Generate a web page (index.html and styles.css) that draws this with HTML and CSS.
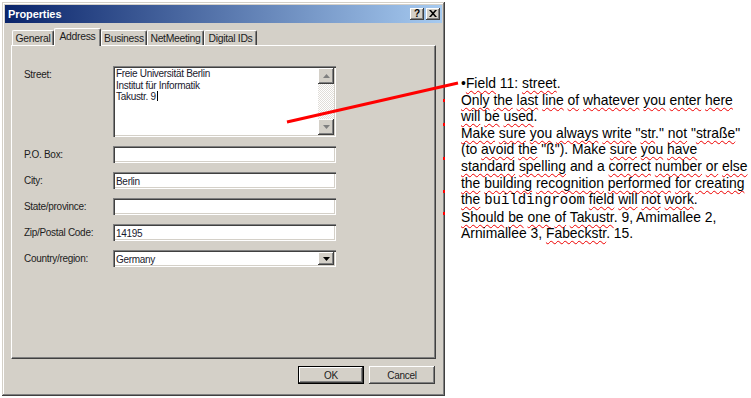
FILE: index.html
```html
<!DOCTYPE html>
<html lang="en">
<head>
    <meta charset="UTF-8">
    <title>Properties</title>
    <link rel="stylesheet" href="styles.css">
</head>
<body>

<div class="page">
    <div class="dialog">
        <div class="titlebar">
            <span class="title">Properties</span>
            <div class="caption-btns">
                <span class="cap-btn">?</span>
                <span class="cap-btn">
                    <svg width="8" height="7" viewBox="0 0 8 7"><path d="M0 0h2l2 2.2 2-2.2h2L5 3.5 8 7H6L4 4.8 2 7H0l3-3.5z" fill="#000"/></svg>
                </span>
            </div>
        </div>

        <div class="tabs">
            <div class="tab tab-general">General</div>
            <div class="tab tab-address active">Address</div>
            <div class="tab tab-business">Business</div>
            <div class="tab tab-netmeeting">NetMeeting</div>
            <div class="tab tab-digital">Digital IDs</div>
        </div>

        <div class="panel">
            <div class="form">
                <div class="lbl lbl-top">Street:</div>
                <div class="box memo">
                    <div class="memo-text">Freie Universität Berlin<br>Institut für Informatik<br>Takustr. 9<span class="caret"></span></div>
                    <div class="vscroll">
                        <span class="sbtn"><svg width="7" height="4" viewBox="0 0 7 4"><path d="M3.5 0L7 4H0z" fill="#808080"/></svg></span>
                        <span class="track"></span>
                        <span class="sbtn"><svg width="7" height="4" viewBox="0 0 7 4"><path d="M0 0h7L3.5 4z" fill="#808080"/></svg></span>
                    </div>
                </div>

                <div class="lbl">P.O. Box:</div>
                <div class="box"></div>

                <div class="lbl">City:</div>
                <div class="box">Berlin</div>

                <div class="lbl">State/province:</div>
                <div class="box"></div>

                <div class="lbl">Zip/Postal Code:</div>
                <div class="box">14195</div>

                <div class="lbl">Country/region:</div>
                <div class="box select">
                    <span class="select-value">Germany</span>
                    <span class="drop-btn"><svg width="7" height="4" viewBox="0 0 7 4"><path d="M0 0h7L3.5 4z" fill="#000"/></svg></span>
                </div>
            </div>
        </div>

        <div class="actions">
            <span class="btn btn-default">OK</span>
            <span class="btn">Cancel</span>
        </div>
    </div>

    <div class="note">
        •<span class="sp">Field</span> 11: <span class="sp">street</span>.<br>
        <span class="sp">Only</span> <span class="sp">the</span> <span class="sp">last</span> <span class="sp">line</span> <span class="sp">of</span> <span class="sp">whatever</span> <span class="sp">you</span> <span class="sp">enter</span> <span class="sp">here</span><br>
        <span class="sp">will</span> <span class="sp">be</span> <span class="sp">used</span>.<br>
        <span class="sp">Make</span> <span class="sp">sure</span> <span class="sp">you</span> <span class="sp">always</span> <span class="sp">write</span> "<span class="sp">str</span>." <span class="sp">not</span> "<span class="sp">straße</span>"<br>
        (to <span class="sp">avoid</span> <span class="sp">the</span> "ß"). Make <span class="sp">sure</span> <span class="sp">you</span> <span class="sp">have</span><br>
        <span class="sp">standard</span> <span class="sp">spelling</span> and a <span class="sp">correct</span> <span class="sp">number</span> <span class="sp">or</span> <span class="sp">else</span><br>
        <span class="sp">the</span> <span class="sp">building</span> <span class="sp">recognition</span> <span class="sp">performed</span> <span class="sp">for</span> <span class="sp">creating</span><br>
        <span class="sp">the</span> <span class="mono">buildingroom</span> <span class="sp">field</span> <span class="sp">will</span> <span class="sp">not</span> <span class="sp">work</span>.<br>
        <span class="sp">Should</span> <span class="sp">be</span> <span class="sp">one</span> <span class="sp">of</span> <span class="sp">Takustr</span>. 9, Amimallee 2,<br>
        Arnimallee 3, <span class="sp">Fabeckstr</span>. 15.
    </div>

    <svg class="overlay" width="751" height="398" viewBox="0 0 751 398">
        <line x1="287" y1="122" x2="458" y2="83" stroke="#f00" stroke-width="3"/>
        <rect x="443" y="99" width="2" height="3" fill="#f00"/>
        <rect x="443" y="123" width="2" height="3" fill="#f00"/>
        <rect x="443" y="157" width="2" height="3" fill="#f00"/>
        <rect x="443" y="190" width="2" height="3" fill="#f00"/>
        <rect x="443" y="212" width="2" height="3" fill="#f00"/>
    </svg>
</div>

</body>
</html>
```

FILE: styles.css
```css
/* General Body Styles */
body {
    margin: 0;
    padding: 0;
    background-color: #fff;
    font-family: "Liberation Sans", Arial, sans-serif;
}

.page {
    position: relative;
    display: flex;
    width: 751px;
    height: 398px;
    overflow: hidden;
}

/* Dialog window */
.dialog {
    box-sizing: border-box;
    width: 443px;
    height: 394px;
    margin: 2px 0 0 2px;
    padding: 3px;
    display: flex;
    flex-direction: column;
    background-color: #d4d0c8;
    box-shadow: inset -1px -1px #404040, inset 1px 1px #d4d0c8, inset -2px -2px #808080, inset 2px 2px #fff;
    font-size: 10px;
    letter-spacing: -0.3px;
    color: #1c1c1c;
}

.titlebar {
    height: 18px;
    display: flex;
    align-items: center;
    justify-content: space-between;
    padding: 0 2px 0 3px;
    background: linear-gradient(to right, #0a246a, #a6caf0);
}

.title {
    color: #fff;
    font-weight: bold;
    font-size: 11px;
    letter-spacing: -0.1px;
}

.caption-btns {
    display: flex;
    gap: 2px;
}

.cap-btn {
    box-sizing: border-box;
    width: 14px;
    height: 12px;
    display: flex;
    align-items: center;
    justify-content: center;
    background-color: #d4d0c8;
    box-shadow: inset -1px -1px #404040, inset 1px 1px #fff, inset -2px -2px #808080;
    font-weight: bold;
    font-size: 10px;
    color: #000;
    padding-bottom: 1px;
}

/* Tabs */
.tabs {
    display: flex;
    align-items: flex-end;
    height: 18px;
    margin-top: 5px;
    padding-left: 7px;
    position: relative;
    z-index: 1;
    margin-bottom: -1px;
}

.tab {
    box-sizing: border-box;
    height: 15px;
    display: flex;
    align-items: center;
    justify-content: center;
    border-top: 1px solid #fff;
    border-left: 1px solid #fff;
    border-right: 1px solid #404040;
    box-shadow: inset -1px 0 #808080;
    border-radius: 2px 2px 0 0;
    margin-bottom: 1px;
    background-color: #d4d0c8;
    font-size: 10.4px;
}

.tab.active {
    height: 18px;
    margin-bottom: 0;
    padding-bottom: 2px;
}

.tab-general { width: 42px; }
.tab-address { width: 47px; }
.tab-business { width: 46px; }
.tab-netmeeting { width: 57px; }
.tab-digital { width: 53px; }

/* Tab panel */
.panel {
    box-sizing: border-box;
    width: 425px;
    height: 314px;
    margin-left: 6px;
    padding: 20px 0 0 12px;
    border-top: 1px solid #fff;
    border-left: 1px solid #fff;
    border-right: 1px solid #404040;
    border-bottom: 1px solid #404040;
    box-shadow: inset -1px -1px #808080;
}

.form {
    display: grid;
    grid-template-columns: 89px 223px;
    row-gap: 9px;
}

.lbl {
    align-self: center;
}

.lbl-top {
    align-self: start;
    padding-top: 3px;
}

.box {
    box-sizing: border-box;
    height: 17px;
    padding: 1px 0 0 3px;
    display: flex;
    align-items: center;
    background-color: #fff;
    box-shadow: inset 1px 1px #808080, inset 2px 2px #404040, inset -1px -1px #fff, inset -2px -2px #d4d0c8;
    color: #1a1a2e;
}

.memo {
    height: 71px;
    padding: 2px 2px 2px 3px;
    align-items: stretch;
    justify-content: space-between;
}

.memo-text {
    line-height: 11.5px;
}

.caret {
    display: inline-block;
    width: 1px;
    height: 10px;
    margin-left: 1px;
    vertical-align: -1px;
    background-color: #000;
}

.vscroll {
    width: 16px;
    display: flex;
    flex-direction: column;
}

.sbtn {
    box-sizing: border-box;
    width: 16px;
    height: 16px;
    display: flex;
    align-items: center;
    justify-content: center;
    background-color: #d4d0c8;
    box-shadow: inset -1px -1px #404040, inset 1px 1px #fff, inset -2px -2px #808080;
}

.track {
    flex: 1;
    background-color: #ece9e4;
    background-image: conic-gradient(#fff 25%, #d4d0c8 0 50%, #fff 0 75%, #d4d0c8 0);
    background-size: 2px 2px;
    opacity: 0.7;
}

.select {
    padding: 2px 2px 2px 3px;
    justify-content: space-between;
    align-items: stretch;
}

.select-value {
    display: flex;
    align-items: center;
    padding-top: 1px;
}

.drop-btn {
    box-sizing: border-box;
    width: 16px;
    display: flex;
    align-items: center;
    justify-content: center;
    background-color: #d4d0c8;
    box-shadow: inset -1px -1px #404040, inset 1px 1px #fff, inset -2px -2px #808080;
}

/* OK / Cancel */
.actions {
    display: flex;
    justify-content: flex-end;
    gap: 5px;
    margin-top: 7px;
    padding-right: 7px;
}

.btn {
    box-sizing: border-box;
    width: 66px;
    height: 18px;
    display: flex;
    align-items: center;
    justify-content: center;
    background-color: #d4d0c8;
    box-shadow: inset -1px -1px #404040, inset 1px 1px #fff, inset -2px -2px #808080;
}

.btn-default {
    border: 1px solid #000;
}

/* Slide notes */
.note {
    padding: 75px 0 0 16px;
    font-size: 13.9px;
    line-height: 16.6px;
    color: #000;
    white-space: nowrap;
}

.sp {
    text-decoration: underline wavy #e00;
    text-decoration-thickness: 1px;
    text-underline-offset: 2px;
    text-decoration-skip-ink: none;
}

.mono {
    font-family: "Liberation Mono", "Courier New", monospace;
    font-size: 14px;
}

.overlay {
    position: absolute;
    left: 0;
    top: 0;
    pointer-events: none;
}
```
